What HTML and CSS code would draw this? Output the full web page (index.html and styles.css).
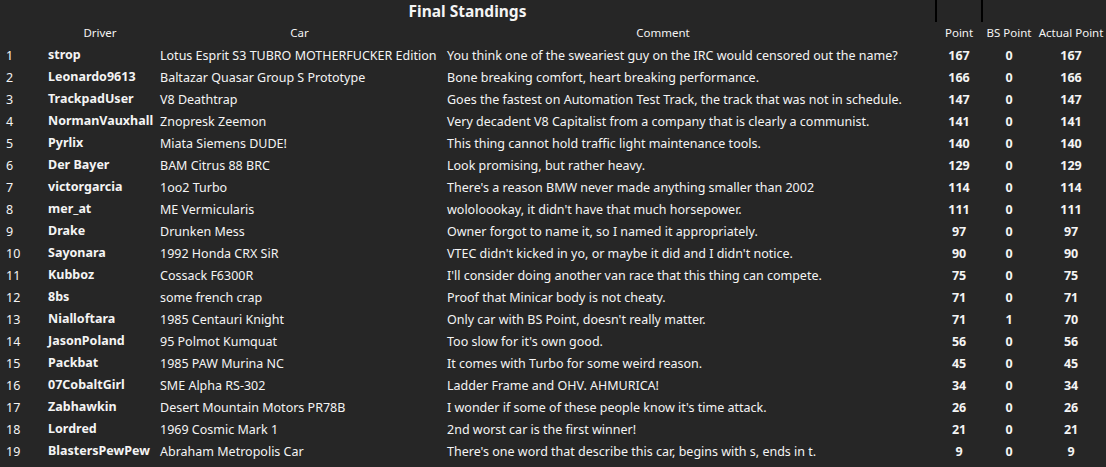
FILE: index.html
```html
<!DOCTYPE html>
<html>
<head>
<meta charset="utf-8">
<link rel="stylesheet" href="styles.css">
</head>
<body>
<table class="standings">
  <colgroup>
    <col class="c-pos"><col class="c-driver"><col class="c-car"><col class="c-comment"><col class="c-gap"><col class="c-point"><col class="c-bs"><col class="c-actual">
  </colgroup>
  <thead>
    <tr class="title-row">
      <th colspan="5" class="title">Final Standings</th>
      <th class="boxed"></th>
      <th></th><th></th>
    </tr>
    <tr class="head-row">
      <th></th><th>Driver</th><th>Car</th><th>Comment</th><th></th><th>Point</th><th>BS Point</th><th>Actual Point</th>
    </tr>
  </thead>
  <tbody>
    <tr><td class="pos">1</td><td class="drv">strop</td><td class="txt">Lotus Esprit S3 TUBRO MOTHERFUCKER Edition</td><td class="txt">You think one of the sweariest guy on the IRC would censored out the name?</td><td></td><td class="num">167</td><td class="num">0</td><td class="num">167</td></tr>
    <tr><td class="pos">2</td><td class="drv">Leonardo9613</td><td class="txt">Baltazar Quasar Group S Prototype</td><td class="txt">Bone breaking comfort, heart breaking performance.</td><td></td><td class="num">166</td><td class="num">0</td><td class="num">166</td></tr>
    <tr><td class="pos">3</td><td class="drv">TrackpadUser</td><td class="txt">V8 Deathtrap</td><td class="txt">Goes the fastest on Automation Test Track, the track that was not in schedule.</td><td></td><td class="num">147</td><td class="num">0</td><td class="num">147</td></tr>
    <tr><td class="pos">4</td><td class="drv">NormanVauxhall</td><td class="txt">Znopresk Zeemon</td><td class="txt">Very decadent V8 Capitalist from a company that is clearly a communist.</td><td></td><td class="num">141</td><td class="num">0</td><td class="num">141</td></tr>
    <tr><td class="pos">5</td><td class="drv">Pyrlix</td><td class="txt">Miata Siemens DUDE!</td><td class="txt">This thing cannot hold traffic light maintenance tools.</td><td></td><td class="num">140</td><td class="num">0</td><td class="num">140</td></tr>
    <tr><td class="pos">6</td><td class="drv">Der Bayer</td><td class="txt">BAM Citrus 88 BRC</td><td class="txt">Look promising, but rather heavy.</td><td></td><td class="num">129</td><td class="num">0</td><td class="num">129</td></tr>
    <tr><td class="pos">7</td><td class="drv">victorgarcia</td><td class="txt">1oo2 Turbo</td><td class="txt">There's a reason BMW never made anything smaller than 2002</td><td></td><td class="num">114</td><td class="num">0</td><td class="num">114</td></tr>
    <tr><td class="pos">8</td><td class="drv">mer_at</td><td class="txt">ME Vermicularis</td><td class="txt">wololoookay, it didn't have that much horsepower.</td><td></td><td class="num">111</td><td class="num">0</td><td class="num">111</td></tr>
    <tr><td class="pos">9</td><td class="drv">Drake</td><td class="txt">Drunken Mess</td><td class="txt">Owner forgot to name it, so I named it appropriately.</td><td></td><td class="num">97</td><td class="num">0</td><td class="num">97</td></tr>
    <tr><td class="pos">10</td><td class="drv">Sayonara</td><td class="txt">1992 Honda CRX SiR</td><td class="txt">VTEC didn't kicked in yo, or maybe it did and I didn't notice.</td><td></td><td class="num">90</td><td class="num">0</td><td class="num">90</td></tr>
    <tr><td class="pos">11</td><td class="drv">Kubboz</td><td class="txt">Cossack F6300R</td><td class="txt">I'll consider doing another van race that this thing can compete.</td><td></td><td class="num">75</td><td class="num">0</td><td class="num">75</td></tr>
    <tr><td class="pos">12</td><td class="drv">8bs</td><td class="txt">some french crap</td><td class="txt">Proof that Minicar body is not cheaty.</td><td></td><td class="num">71</td><td class="num">0</td><td class="num">71</td></tr>
    <tr><td class="pos">13</td><td class="drv">Nialloftara</td><td class="txt">1985 Centauri Knight</td><td class="txt">Only car with BS Point, doesn't really matter.</td><td></td><td class="num">71</td><td class="num">1</td><td class="num">70</td></tr>
    <tr><td class="pos">14</td><td class="drv">JasonPoland</td><td class="txt">95 Polmot Kumquat</td><td class="txt">Too slow for it's own good.</td><td></td><td class="num">56</td><td class="num">0</td><td class="num">56</td></tr>
    <tr><td class="pos">15</td><td class="drv">Packbat</td><td class="txt">1985 PAW Murina NC</td><td class="txt">It comes with Turbo for some weird reason.</td><td></td><td class="num">45</td><td class="num">0</td><td class="num">45</td></tr>
    <tr><td class="pos">16</td><td class="drv">07CobaltGirl</td><td class="txt">SME Alpha RS-302</td><td class="txt">Ladder Frame and OHV. AHMURICA!</td><td></td><td class="num">34</td><td class="num">0</td><td class="num">34</td></tr>
    <tr><td class="pos">17</td><td class="drv">Zabhawkin</td><td class="txt">Desert Mountain Motors PR78B</td><td class="txt">I wonder if some of these people know it's time attack.</td><td></td><td class="num">26</td><td class="num">0</td><td class="num">26</td></tr>
    <tr><td class="pos">18</td><td class="drv">Lordred</td><td class="txt">1969 Cosmic Mark 1</td><td class="txt">2nd worst car is the first winner!</td><td></td><td class="num">21</td><td class="num">0</td><td class="num">21</td></tr>
    <tr><td class="pos">19</td><td class="drv">BlastersPewPew</td><td class="txt">Abraham Metropolis Car</td><td class="txt">There's one word that describe this car, begins with s, ends in t.</td><td></td><td class="num">9</td><td class="num">0</td><td class="num">9</td></tr>
  </tbody>
</table>
</body>
</html>
```
FILE: styles.css
```css
html, body {
  margin: 0;
  padding: 0;
  background: #262626;
}
body {
  color: #f4f4f4;
  font-family: "Noto Sans", "Open Sans", sans-serif;
  font-size: 12.5px;
}
.standings {
  border-collapse: collapse;
  table-layout: fixed;
  width: 1106px;
}
.c-pos { width: 44px; }
.c-driver { width: 112px; }
.c-car { width: 287px; }
.c-comment { width: 440px; }
.c-gap { width: 53px; }
.c-point { width: 46px; }
.c-bs { width: 54px; }
.c-actual { width: 70px; }
.standings tr {
  height: 22px;
}
.standings th, .standings td {
  padding: 0;
  line-height: 16px;
  white-space: nowrap;
  overflow: visible;
  vertical-align: middle;
}
.head-row th {
  font-weight: normal;
  font-size: 11.5px;
  text-align: center;
}
.title {
  font-size: 15.5px;
  font-weight: bold;
  text-align: center;
}
.boxed {
  border-left: 2px solid #000;
  border-right: 2px solid #000;
}
.standings .pos { padding-left: 6px; padding-top: 2px; }
.standings .drv {
  font-weight: bold;
  padding-left: 4px;
  padding-bottom: 1px;
}
.standings .txt { padding-left: 4px; padding-top: 2px; }
.standings .num {
  font-weight: bold;
  text-align: center;
  padding-top: 2px;
}
```
